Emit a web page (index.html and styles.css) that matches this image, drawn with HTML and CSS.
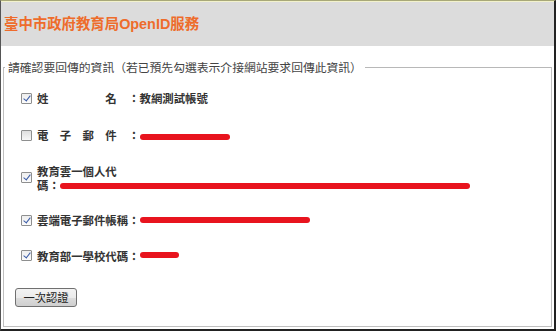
FILE: index.html
```html
<!DOCTYPE html>
<html>
	<head>
		<meta charset="utf-8" />
		<meta name="viewport" content="width=device-width" />
		<title>臺中市政府教育局OpenID服務</title>
		<link rel="stylesheet" href="styles.css">
	</head>
	<body>
		<div class="frame">
			<div class="header">
				<h1>臺中市政府教育局OpenID服務</h1>
			</div>

			<form class="confirm" onsubmit="event.preventDefault()">
				<fieldset>
					<legend>請確認要回傳的資訊（若已預先勾選表示介接網站要求回傳此資訊）</legend>

					<label class="row">
						<input type="checkbox" name="fullname" checked>
						<span class="field">姓　　　　　名　：教網測試帳號</span>
					</label>
					<label class="row">
						<input type="checkbox" name="email">
						<span class="field">電　子　郵　件　：<span class="redact redact-mail"></span></span>
					</label>
					<label class="row">
						<input type="checkbox" name="personal_id" checked>
						<span class="field">教育雲一個人代<br>碼：<span class="redact redact-id"></span></span>
					</label>
					<label class="row">
						<input type="checkbox" name="cloud_mail" checked>
						<span class="field">雲端電子郵件帳稱：<span class="redact redact-cloud"></span></span>
					</label>
					<label class="row">
						<input type="checkbox" name="school_id" checked>
						<span class="field">教育部一學校代碼：<span class="redact redact-school"></span></span>
					</label>

					<button>一次認證</button>
				</fieldset>
			</form>
		</div>
	</body>
</html>
```

FILE: styles.css
```css
html, body {
	margin: 0;
	padding: 0;
	background: #fff;
}
body {
	font-family: "Noto Sans CJK TC", "Liberation Sans", sans-serif;
	color: #333;
}
.frame {
	box-sizing: border-box;
	width: 556px;
	height: 331px;
	display: flex;
	flex-direction: column;
	border-top: 1px solid #a8a878;
	border-left: 1px solid #555;
	border-right: 2px solid #222;
	border-bottom: 2px solid #222;
}
.header {
	height: 44px;
	display: flex;
	align-items: center;
	padding-left: 3px;
	background: #dcdcdc;
	border-top: 1px solid #f2f2cc;
}
.header h1 {
	margin: 0;
	font-family: "Liberation Sans", "Noto Sans CJK TC", sans-serif;
	font-size: 14.4px;
	line-height: 18px;
	font-weight: bold;
	color: #ee6c2b;
}
.confirm {
	flex: 1;
	display: flex;
	flex-direction: column;
}
fieldset {
	flex: 1;
	margin: 13px 2px 2px 2px;
	padding: 16px 0 0 0;
	border: 1px solid #c0c0c0;
	border-top-color: #b8b8b8;
}
legend {
	margin-left: 1px;
	padding: 0 3px;
	font-size: 11.8px;
	line-height: 16px;
	color: #444;
}
.row {
	display: flex;
	align-items: center;
	margin: 0 0 21.5px 17px;
	font-size: 11.4px;
	line-height: 14px;
	font-weight: bold;
	color: #333;
}
.row:first-of-type {
	margin-bottom: 23px;
}
.row input {
	appearance: none;
	-webkit-appearance: none;
	position: relative;
	flex: none;
	width: 11px;
	height: 11px;
	margin: 0 5px 0 0;
	border: 1px solid #8e8f8f;
	border-radius: 1px;
	background: linear-gradient(#dedede, #f7f7f7);
}
.row input:checked {
	background: linear-gradient(#eeeeee, #fbfbfb);
}
.row input:checked::after {
	content: "";
	position: absolute;
	left: 3px;
	top: 0;
	width: 3px;
	height: 6px;
	border: solid #3a5ba6;
	border-width: 0 1.5px 1.5px 0;
	transform: rotate(38deg);
}
.redact {
	display: inline-block;
	height: 6px;
	border-radius: 3px;
	background: #e8141e;
	vertical-align: middle;
}
.redact-mail {
	width: 90px;
}
.redact-id {
	width: 410px;
}
.redact-cloud {
	width: 170px;
	position: relative;
	top: -2px;
}
.redact-school {
	width: 39px;
	position: relative;
	top: -2px;
}
button {
	display: block;
	margin: 25.5px 0 0 11px;
	width: 62px;
	height: 19px;
	padding: 0;
	font-family: "Noto Sans CJK TC", sans-serif;
	font-size: 11.3px;
	line-height: 17px;
	color: #222;
	border: 1px solid #707070;
	border-radius: 3px;
	background: linear-gradient(#f3f3f3, #ebebeb 50%, #dddddd 50%, #cfcfcf);
}
```
